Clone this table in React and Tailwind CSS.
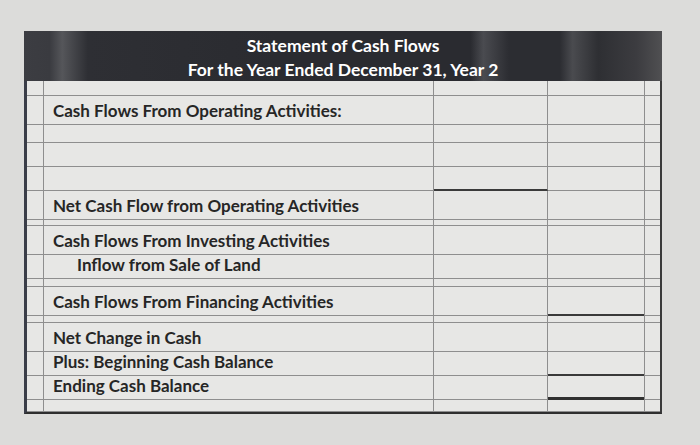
import React from "react";

const rows = [
  { h: 15 },
  { h: 24, t: "Cash Flows From Operating Activities:" },
  { h: 23 },
  { h: 24 },
  { h: 24, thick2: 2 },
  { h: 24, t: "Net Cash Flow from Operating Activities" },
  { h: 11 },
  { h: 24, t: "Cash Flows From Investing Activities" },
  { h: 23, t: "Inflow from Sale of Land", indent: true },
  { h: 14 },
  { h: 24, t: "Cash Flows From Financing Activities", thick3: 2 },
  { h: 12 },
  { h: 24, t: "Net Change in Cash" },
  { h: 24, t: "Plus: Beginning Cash Balance", thick3: 2 },
  { h: 23, t: "Ending Cash Balance", thick3: 3 },
  { h: 18 },
];

const thin = "border-r border-r-[#8e8e8e] border-b border-b-[#8e8e8e]";
const thick2 = "border-r border-r-[#8e8e8e] border-b-2 border-b-[#3a3a3a]";
const thick3 = "border-r border-r-[#8e8e8e] border-b-[3px] border-b-[#303030]";
const pick = (n) => (n === 2 ? thick2 : n === 3 ? thick3 : thin);

export default function App() {
  return (
    <div
      className="w-[700px] h-[445px] overflow-hidden bg-[#dcdcda] pt-[31px] pl-[24px]"
      style={{ fontFamily: "Lato, 'Open Sans', sans-serif" }}
    >
      <div className="w-[638px]">
        <div className="h-[50px] pt-[3px] text-center text-white font-bold text-[17.5px] leading-[24px] bg-[linear-gradient(90deg,#3c3d42_0%,#3a3b40_4%,#55565a_6%,#2e2f34_10%,#2a2b30_40%,#2a2b30_70%,#4a4b50_72%,#2c2d32_76%,#2c2d32_84%,#4a4b4f_86%,#2e2f33_90%,#3c3c40_96%,#505052_100%)]">
          <div>Statement of Cash Flows</div>
          <div>For the Year Ended December 31, Year 2</div>
        </div>
        <div className="border-l-[3px] border-l-[#3a3d48] border-r-2 border-r-[#3a3a3a] border-b-2 border-b-[#2e2e2e] bg-[#e7e7e5]">
          {rows.map((r, i) => (
            <div
              key={i}
              className="grid grid-cols-[17px_390px_114px_97px_1fr]"
              style={{ height: r.h }}
            >
              <div className={thin} />
              <div className={`${thin} flex items-center pt-[2px] text-[#262626] font-bold text-[17px] whitespace-nowrap ${r.indent ? "pl-[33px]" : "pl-[9px]"}`}>
                {r.t}
              </div>
              <div className={pick(r.thick2)} />
              <div className={pick(r.thick3)} />
              <div className="border-b border-b-[#8e8e8e]" />
            </div>
          ))}
        </div>
      </div>
    </div>
  );
}
